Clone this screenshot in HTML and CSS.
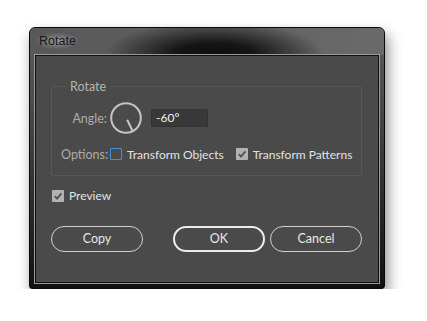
FILE: index.html
```html
<!DOCTYPE html>
<html lang="en">
<head>
    <meta charset="UTF-8">
    <title>Rotate</title>
    <link rel="stylesheet" href="styles.css">
</head>
<body>
    <div class="window">
        <div class="titlebar">
            <span class="title">Rotate</span>
        </div>
        <div class="panel">
            <fieldset class="group">
                <legend>Rotate</legend>
                <div class="row angle-row">
                    <span class="label">Angle:</span>
                    <svg class="dial" width="32" height="32" viewBox="0 0 32 32">
                        <circle cx="16" cy="16" r="14.8" fill="none" stroke="#c4c4c4" stroke-width="2"/>
                        <line x1="17.2" y1="17.8" x2="22.6" y2="29" stroke="#c4c4c4" stroke-width="2"/>
                    </svg>
                    <div class="input">-60°</div>
                </div>
                <div class="row options-row">
                    <span class="label">Options:</span>
                    <span class="check"><span class="box"></span>Transform Objects</span>
                    <span class="check"><span class="box checked"><svg width="12" height="12" viewBox="0 0 12 12"><path d="M2.8 6.2 L5 8.6 L9.4 3.4" fill="none" stroke="#505050" stroke-width="1.8"/></svg></span>Transform Patterns</span>
                </div>
            </fieldset>

            <div class="preview">
                <span class="check"><span class="box checked"><svg width="12" height="12" viewBox="0 0 12 12"><path d="M2.8 6.2 L5 8.6 L9.4 3.4" fill="none" stroke="#505050" stroke-width="1.8"/></svg></span>Preview</span>
            </div>

            <div class="buttons">
                <button class="btn">Copy</button>
                <div class="btn-right">
                    <button class="btn primary">OK</button>
                    <button class="btn">Cancel</button>
                </div>
            </div>
        </div>
    </div>
</body>
</html>
```

FILE: styles.css
```css
* {
    box-sizing: border-box;
    margin: 0;
    padding: 0;
}

body {
    background: #fff;
    font-family: 'Lato', 'Liberation Sans', sans-serif;
    font-size: 12px;
    padding: 27px 0 0 29px;
}

.window {
    width: 356px;
    height: 262px;
    border: 1px solid #0a0a0a;
    border-radius: 6px 6px 3px 3px;
    background: linear-gradient(180deg, #5c5c5c 0%, #4a4a4a 30%, #222 80%, #111 100%);
    padding: 0 5px 5px;
    box-shadow: 3px 7px 14px rgba(0, 0, 0, 0.45);
    display: flex;
    flex-direction: column;
}

.titlebar {
    height: 27px;
    margin: 0 -5px;
    padding: 5px 0 0 6px;
    border-radius: 5px 5px 0 0;
    background:
        radial-gradient(ellipse 110px 34px at 52% 100%, #0e0e0e 0%, #151515 35%, rgba(20, 20, 20, 0) 100%),
        linear-gradient(90deg, #585858, #606060 50%, #6a6a6a);
}

.title {
    color: #161616;
    font-family: 'Liberation Sans', sans-serif;
    font-size: 12.5px;
    padding: 1px 3px;
    background: radial-gradient(ellipse at center, rgba(220, 220, 220, 0.45) 0%, rgba(200, 200, 200, 0) 75%);
}

.panel {
    flex: 1;
    background: #4a4a4a;
    border: 1px solid #111;
    box-shadow: 0 0 0 1px #9a9a9a;
    padding: 23px 16px 0 15px;
    color: #e2e2e2;
}

.group {
    border: 1px solid #575757;
    border-radius: 2px;
    padding: 8px 8px 13px 9px;
}

.group legend {
    color: #b4b4b4;
    margin-left: 5px;
    padding: 0 4px;
    line-height: 15px;
    font-size: 12.5px;
}

.row {
    display: flex;
    align-items: center;
    white-space: nowrap;
}

.label {
    flex-shrink: 0;
    color: #acacac;
    width: 46px;
    text-align: right;
    margin-right: 3px;
    font-size: 12.5px;
}

.dial {
    display: block;
    flex-shrink: 0;
}

.input {
    margin-left: 9px;
    width: 57px;
    height: 18px;
    background: #393939;
    border: 1px solid #333;
    border-radius: 1px;
    padding-left: 4px;
    line-height: 16px;
    color: #f0f0f0;
}

.options-row {
    margin-top: 12px;
    height: 16px;
}

.check {
    display: inline-flex;
    align-items: center;
    flex-shrink: 0;
    white-space: nowrap;
    font-size: 12px;
}

.options-row .check + .check {
    margin-left: 12px;
}

.box {
    flex-shrink: 0;
    width: 12px;
    height: 12px;
    border: 1.5px solid #3f8fdf;
    border-radius: 1px;
    margin-right: 5px;
    display: inline-block;
}

.box.checked {
    border: none;
    background: #b2b2b2;
}

.box svg {
    display: block;
}

.preview {
    margin-top: 12px;
    padding-left: 1px;
}

.buttons {
    display: flex;
    justify-content: space-between;
    margin-top: 21px;
}

.btn-right {
    display: flex;
    gap: 5px;
}

.btn {
    width: 92px;
    height: 26px;
    border: 1.5px solid #cfcfcf;
    border-radius: 13px;
    background: transparent;
    color: #e8e8e8;
    font-family: 'Lato', 'Liberation Sans', sans-serif;
    font-size: 12.5px;
}

.btn.primary {
    border: 2px solid #ececec;
}
```
